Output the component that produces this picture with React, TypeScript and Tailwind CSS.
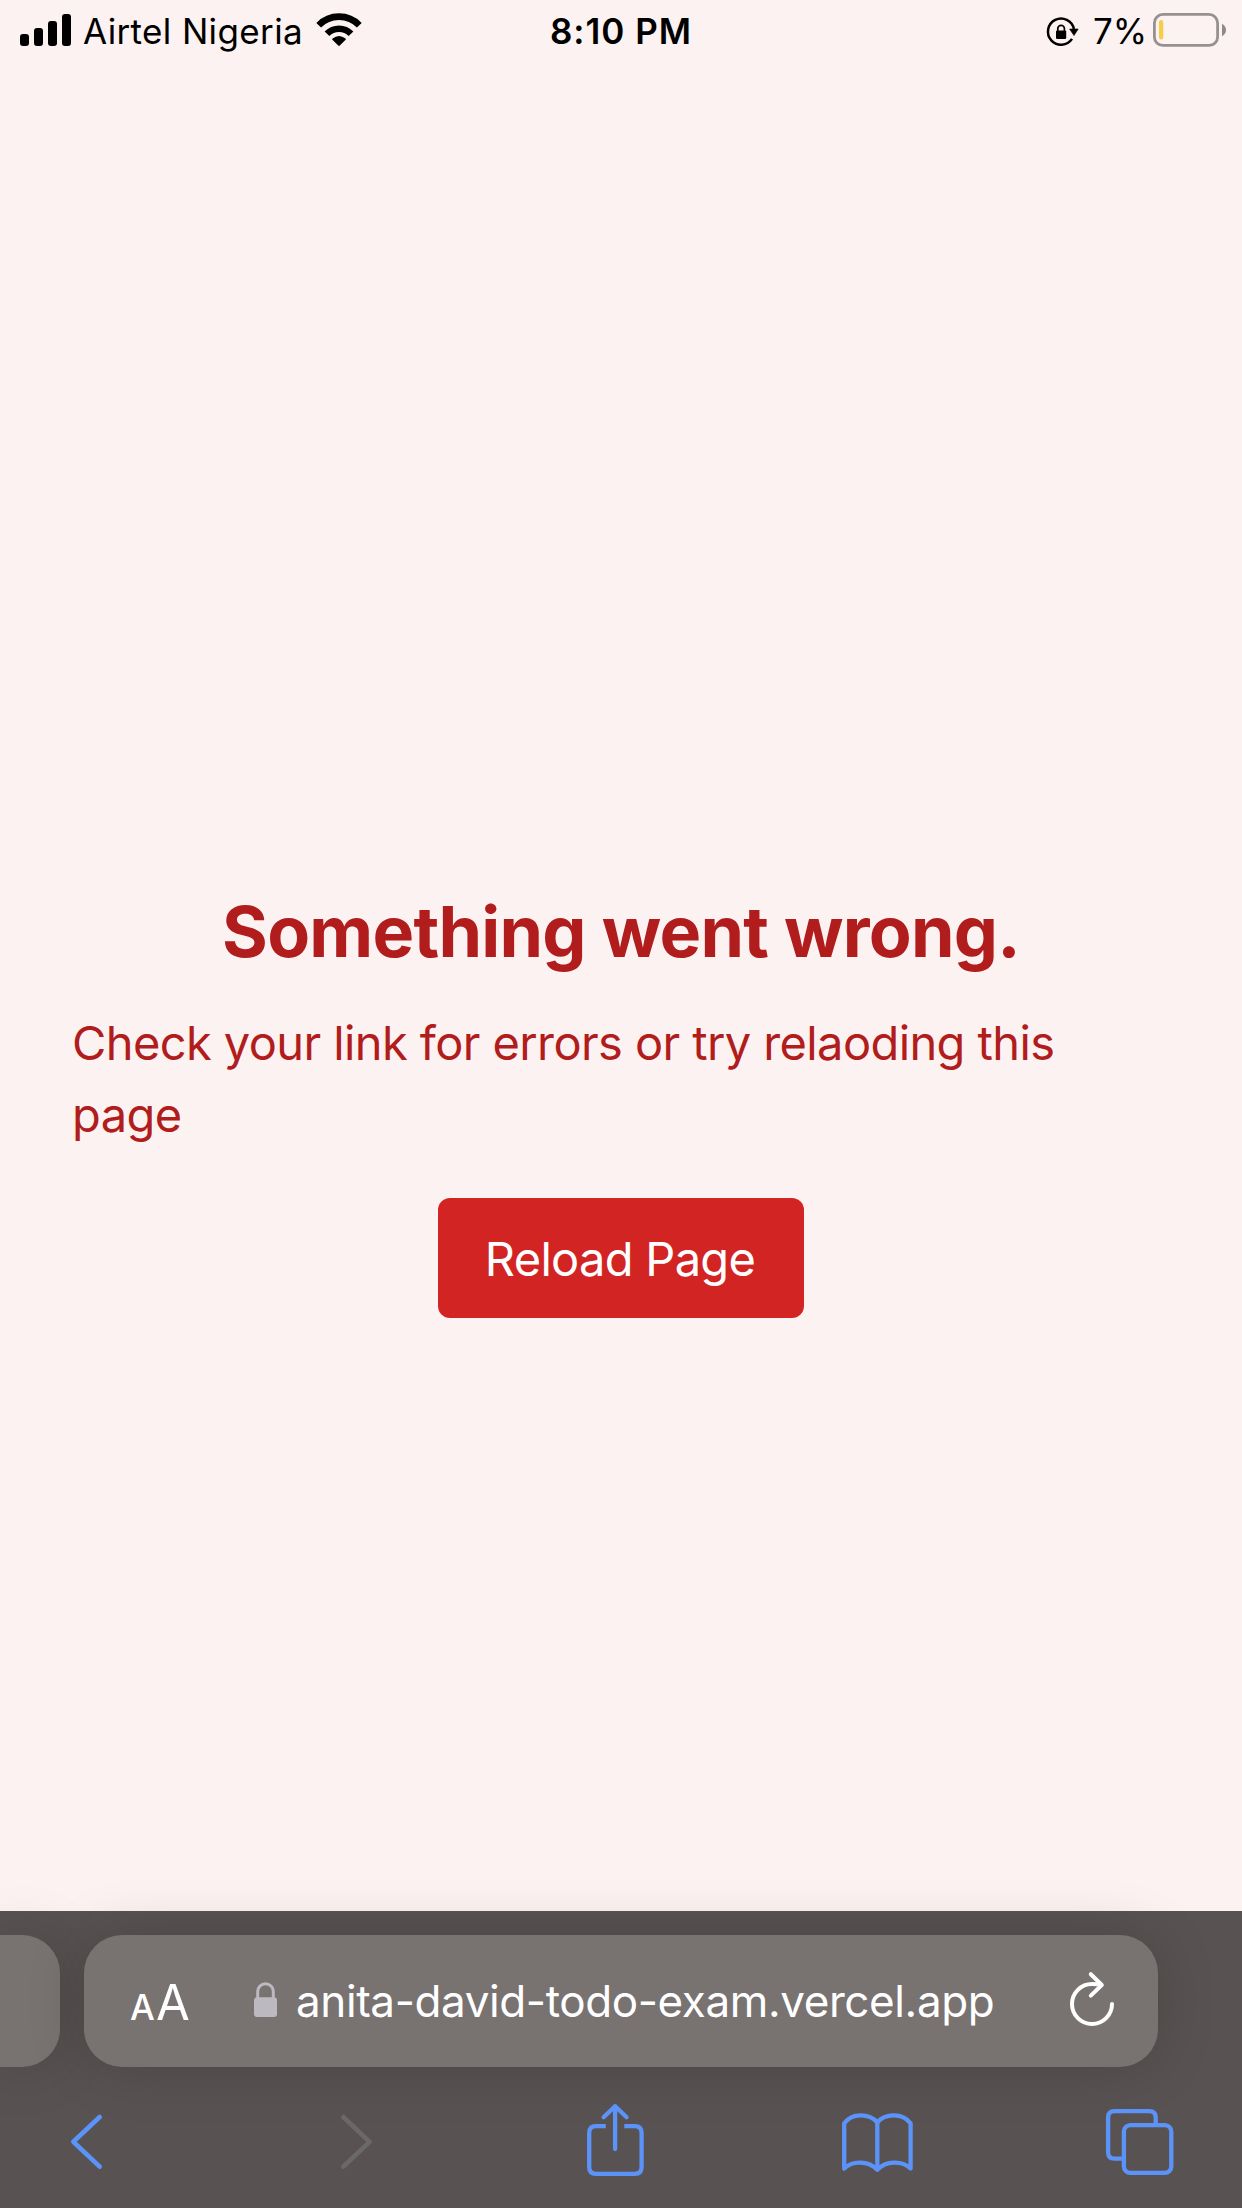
import type { ReactNode } from 'react';

function StatusBar() {
  return (
    <header className="grid h-[62px] shrink-0 grid-cols-[1fr_auto_1fr] items-center text-[35px] leading-none text-black">
      <div className="flex items-center">
        <svg className="ml-5 h-[62px] w-[51px]" viewBox="20 0 51 62">
          <rect x="20" y="34" width="9" height="12" rx="3" />
          <rect x="34" y="28" width="9" height="18" rx="3" />
          <rect x="48" y="21" width="9" height="25" rx="3" />
          <rect x="62" y="14" width="9" height="32" rx="3" />
        </svg>
        <span className="ml-3 w-[232px] tracking-[0.36px]">Airtel Nigeria</span>
        <svg className="h-[62px] w-[48px]" viewBox="315 0 48 62">
          <g fill="none" stroke="#000" strokeWidth="6.6">
            <path d="M318.7 25.2a28.3 28.3 0 0 1 40.6 0" />
            <path d="M327 33.8a16.7 16.7 0 0 1 24 0" />
          </g>
          <path d="M338.2 45.6L332.4 39.8Q331.8 39.2 332.5 38.5Q339 33.3 345.5 38.5Q346.2 39.2 345.6 39.8L339.8 45.6Q339 46.3 338.2 45.6Z" />
        </svg>
      </div>
      <span className="font-semibold tracking-[1px]">8:10 PM</span>
      <div className="flex items-center justify-end">
        <svg className="h-[62px] w-[36px]" viewBox="1045 0 36 62">
          <path d="M1073.9 29A13.1 13.1 0 1 0 1072 38.9" fill="none" stroke="#000" strokeWidth="2.5" />
          <path d="M1069.6 29H1078.2L1074 35.6Z" stroke="#000" strokeWidth=".6" strokeLinejoin="round" />
          <rect x="1056" y="30.4" width="10.2" height="8.6" rx="1.2" />
          <path d="M1057.8 31V28.6a3.3 3.3 0 0 1 6.6 0V31" fill="none" stroke="#000" strokeWidth="1.7" />
        </svg>
        <span className="ml-[12px] w-[59px] tracking-normal">7%</span>
        <svg className="mr-[14px] h-[62px] w-[76px]" viewBox="1152 0 76 62">
          <rect x="1154.4" y="14.4" width="63.2" height="31" rx="8.5" fill="none" stroke="#979090" strokeWidth="2.8" />
          <rect x="1159" y="20" width="4.2" height="19.4" rx="2" fill="#f7cd46" />
          <path d="M1222 23.8Q1226 26 1226 30T1222 36.2Z" fill="#8f8989" />
        </svg>
      </div>
    </header>
  );
}

function ErrorMessage() {
  return (
    <main className="flex flex-1 flex-col items-center px-[72px] pt-[824px] text-[#b11c1c]">
      <h1 className="h-24 text-[70px] leading-[92px] font-bold tracking-[-0.75px] whitespace-nowrap">
        Something went wrong.
      </h1>
      <p className="mt-[25px] w-full text-[47px] leading-[72px] tracking-[-0.6px]">
        Check your link for errors or try relaoding this
        <br />
        page
      </p>
      <button className="mt-[47px] h-[120px] w-[366px] rounded-xl bg-[#d32424] pt-0.5 pr-0.5 text-[47px] leading-[72px] tracking-[-0.7px] text-white">
        Reload Page
      </button>
    </main>
  );
}

function AddressBar() {
  return (
    <div className="flex gap-6 pt-6">
      <div className="h-[132px] w-[60px] rounded-r-[38px] bg-[#787271] shadow-[0_0_60px_rgba(0,0,0,0.16)]" />
      <div className="flex h-[132px] w-[1074px] items-center rounded-[38px] bg-[#787271] text-white shadow-[0_0_60px_rgba(0,0,0,0.16)]">
        <div className="ml-[46px] flex w-[120px] items-baseline pt-0.5 leading-none">
          <span className="w-[26px] text-[35px] font-medium">A</span>
          <span className="text-[49px]">A</span>
        </div>
        <svg className="ml-[2px] h-[132px] w-[28px]" viewBox="252 1935 28 132">
          <rect x="254" y="1997.3" width="23" height="19.8" rx="3" fill="#bcbac0" />
          <path d="M257.7 1999V1991.5a7.8 7.8 0 0 1 15.6 0V1999" fill="none" stroke="#bcbac0" strokeWidth="3" />
        </svg>
        <span className="ml-4 w-[764px] text-[44px] leading-none tracking-[-0.4px]">
          anita-david-todo-exam.vercel.app
        </span>
        <svg className="h-[132px] w-[60px]" viewBox="1060 1935 60 132" fill="none" stroke="#fff" strokeWidth="4" strokeLinecap="round" strokeLinejoin="round">
          <path d="M1112 2004A20 20 0 1 1 1092 1984Q1097 1984 1101 1985" />
          <path d="M1090.8 1974.2L1101.8 1985L1090.8 1995.6" />
        </svg>
      </div>
    </div>
  );
}

function ToolIcon({ viewBox, label, color, children }: { viewBox: string; label: string; color: string; children: ReactNode }) {
  return (
    <button aria-label={label} className={color}>
      <svg className="size-[84px]" viewBox={viewBox} fill="none" stroke="currentColor" strokeWidth="4.3" strokeLinejoin="round">
        {children}
      </svg>
    </button>
  );
}

function Toolbar() {
  const blue = 'text-[#5b93f9]';
  return (
    <nav className="flex justify-between pt-8 pr-[60px] pl-[46px]">
      <ToolIcon label="Back" color={blue} viewBox="46 2099 84 84">
        <path d="M99.7 2117L73.3 2141.8L99.7 2166.6" strokeLinecap="round" strokeWidth="4.6" />
      </ToolIcon>
      <ToolIcon label="Forward" color="text-[#6b6967]" viewBox="309 2099 84 84">
        <path d="M343.3 2117L369.6 2141.8L343.3 2166.6" strokeLinecap="round" strokeWidth="4.6" />
      </ToolIcon>
      <ToolIcon label="Share" color={blue} viewBox="572 2099 84 84">
        <path d="M605.8 2126.2H596Q589.2 2126.2 589.2 2133V2167Q589.2 2173.8 596 2173.8H634.8Q641.6 2173.8 641.6 2167V2133Q641.6 2126.2 634.8 2126.2H624.3" />
        <path d="M615.1 2149V2106.2M603.6 2117.2L615.1 2106.2L626.6 2117.2" strokeLinecap="round" />
      </ToolIcon>
      <ToolIcon label="Bookmarks" color={blue} viewBox="835 2099 84 84">
        <path d="M844.2 2123.3C852 2113 869 2113 877.3 2122.5C885.5 2113 902.5 2113 910.6 2123.3V2168.6C902.5 2160.5 886 2160.5 877.3 2169.8C868.5 2160.5 852 2160.5 844.2 2168.6ZM877.3 2122.5V2169.8" />
      </ToolIcon>
      <ToolIcon label="Tabs" color={blue} viewBox="1098 2099 84 84">
        <path d="M1155.7 2125V2117.5Q1155.7 2111.1 1149.3 2111.1H1114.5Q1108.1 2111.1 1108.1 2117.5V2152.2Q1108.1 2158.6 1114.5 2158.6H1123" />
        <rect x="1123.9" y="2125.2" width="47.4" height="47.6" rx="6.4" />
      </ToolIcon>
    </nav>
  );
}

export default function App() {
  return (
    <div className="flex h-[2208px] w-[1242px] flex-col overflow-hidden bg-[#fcf2f1] font-['Inter',sans-serif]">
      <StatusBar />
      <ErrorMessage />
      <footer className="h-[297px] shrink-0 bg-[#585352]">
        <AddressBar />
        <Toolbar />
      </footer>
    </div>
  );
}
